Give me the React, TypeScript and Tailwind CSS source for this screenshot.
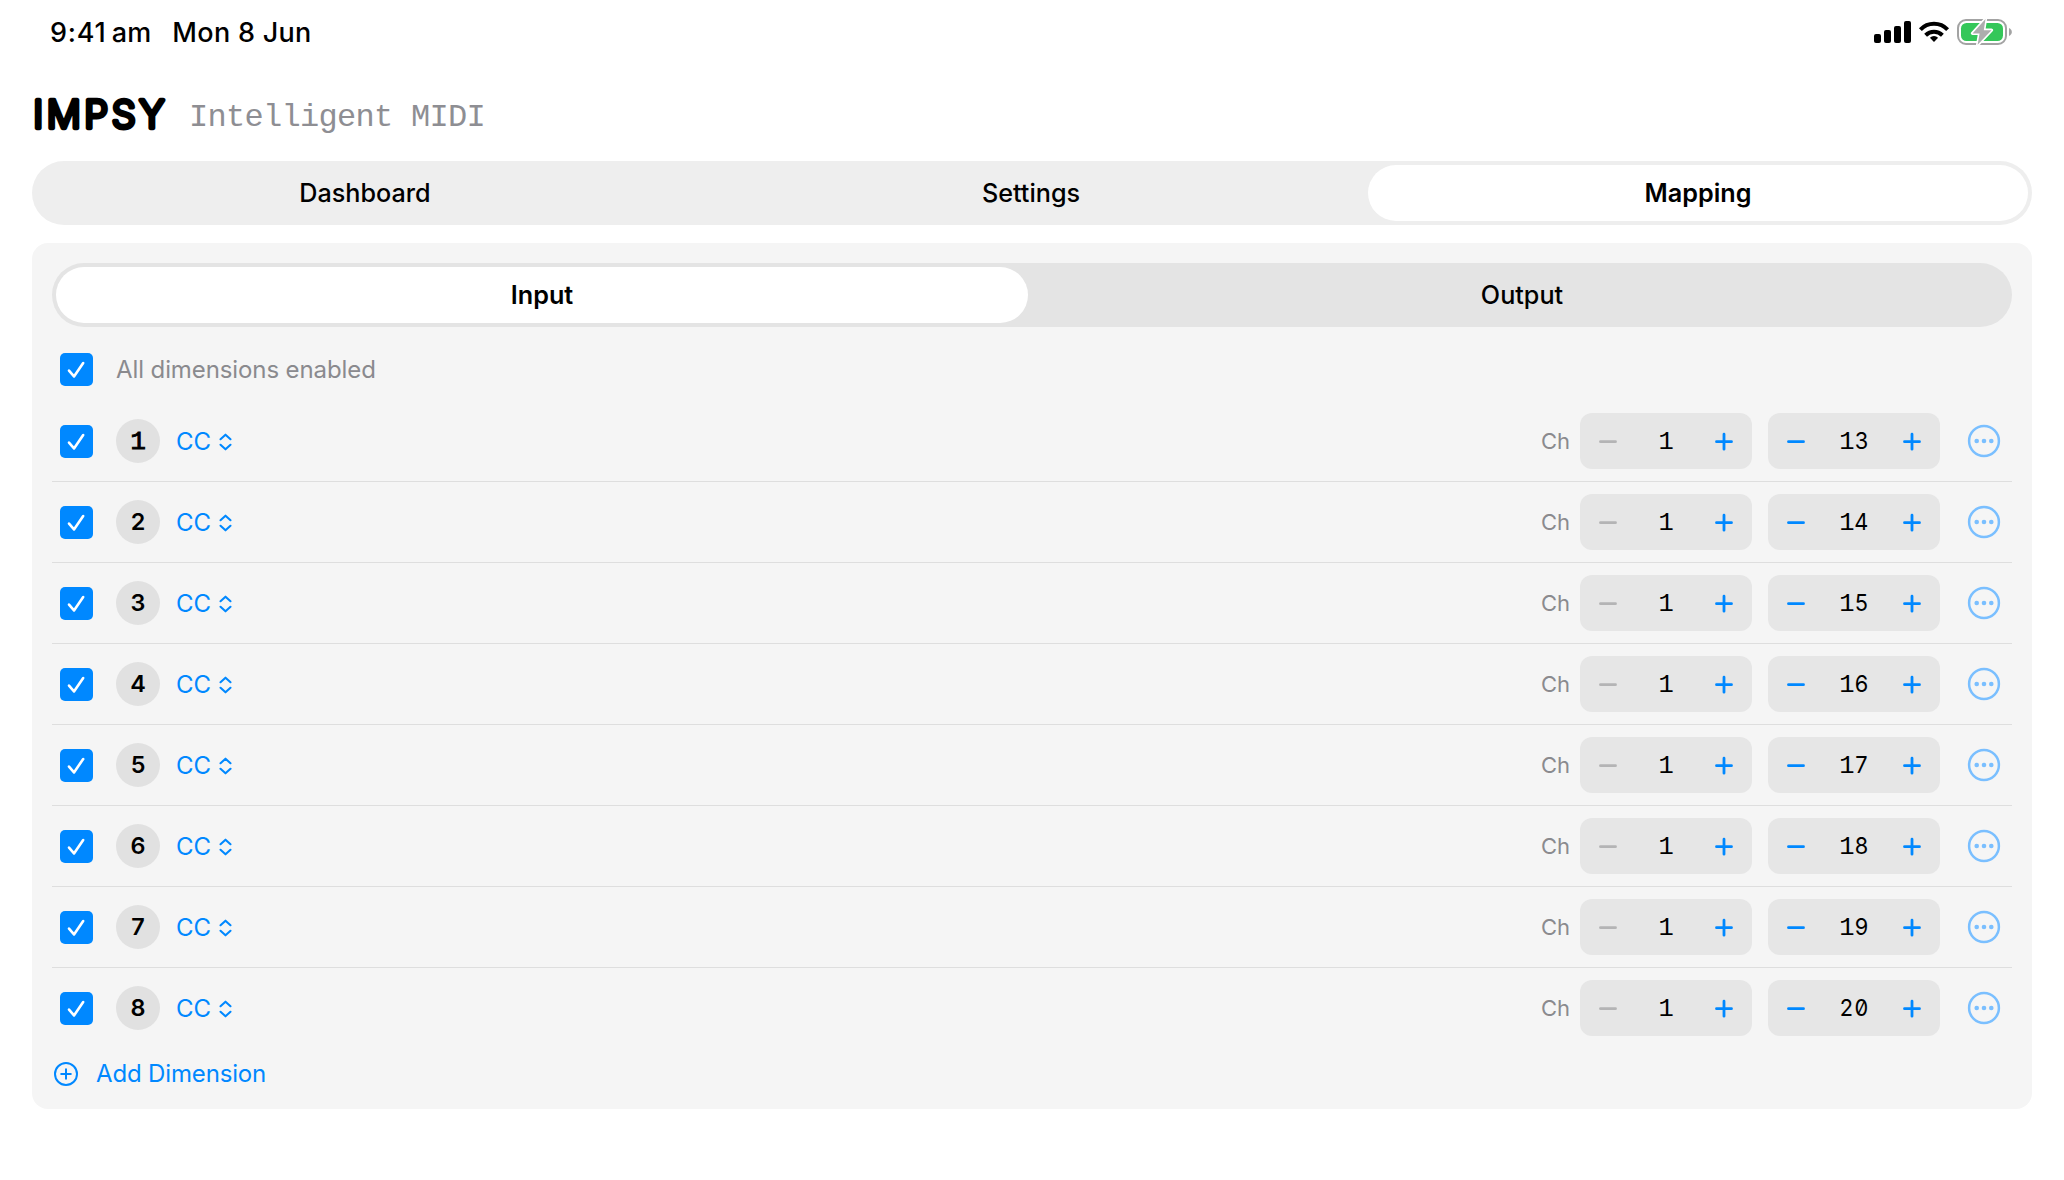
const INTER = "font-['Inter','Liberation_Sans',sans-serif]";

function Digits({ value, weight }: { value: number; weight: "medium" | "bold" }) {
  return (
    <span className="flex text-[23.4px] leading-none text-black">
      {String(value)
        .split("")
        .map((d, i) =>
          d === "1" ? (
            <span
              key={i}
              className={
                weight === "bold"
                  ? "w-[14.8px] translate-y-[2px] text-center font-['Liberation_Mono',monospace] text-[25.5px] leading-[24px] [-webkit-text-stroke:1px_currentColor]"
                  : "w-[14.8px] translate-y-[2px] text-center font-['Liberation_Mono',monospace] text-[25.5px] leading-[24px]"
              }
            >
              1
            </span>
          ) : (
            <span
              key={i}
              className={
                weight === "bold"
                  ? "flex w-[14.8px] justify-center leading-[24px] font-semibold"
                  : "flex w-[14.8px] scale-x-[0.93] justify-center leading-[24px] [font-feature-settings:'zero']"
              }
            >
              {d}
            </span>
          ),
        )}
    </span>
  );
}

function Checkbox() {
  return (
    <span className="flex h-[33px] w-[33px] shrink-0 items-center justify-center rounded-[5px] bg-[#0088ff]">
      <svg width="33" height="33" viewBox="0 0 33 33" fill="none">
        <path d="M9 17.6 L14 23.4 L23.2 10" stroke="#fff" strokeWidth="2.6" strokeLinecap="round" strokeLinejoin="round" />
      </svg>
    </span>
  );
}

function Stepper({ value, atMin }: { value: number; atMin?: boolean }) {
  return (
    <div className="flex h-14 w-[172px] items-center justify-between rounded-xl bg-[#e6e6e6] px-[18px]">
      <svg width="20" height="20" viewBox="0 0 20 20">
        <path d="M2.5 10.7H17.5" stroke={atMin ? "#b4b4b5" : "#0088ff"} strokeWidth="2.8" strokeLinecap="round" />
      </svg>
      <Digits value={value} weight="medium" />
      <svg width="20" height="20" viewBox="0 0 20 20">
        <path d="M2.5 10.7H17.5M10 3.2V18.2" stroke="#0088ff" strokeWidth="2.8" strokeLinecap="round" />
      </svg>
    </div>
  );
}

function DimensionRow({ index, last }: { index: number; last: boolean }) {
  return (
    <div className={last ? "flex h-20 items-center" : "flex h-[81px] items-center border-b border-[#dedede]"}>
      <div className="flex w-16 pt-px pl-2">
        <Checkbox />
      </div>
      <div className="flex h-11 w-11 items-center justify-center rounded-full bg-[#e1e1e1]">
        <Digits value={index} weight="bold" />
      </div>
      <div className="ml-4 flex items-center gap-2 pt-px text-[#0088ff]">
        <span className="text-[24px] leading-none">CC</span>
        <svg width="13" height="18" viewBox="0 0 13 18" fill="none">
          <path d="M1.5 6.2 L6.5 1.7 L11.5 6.2 M1.5 11.8 L6.5 16.3 L11.5 11.8" stroke="#0088ff" strokeWidth="2.1" strokeLinecap="round" strokeLinejoin="round" />
        </svg>
      </div>
      <div className="ml-auto flex items-center">
        <span className="mr-[10px] text-[22px] leading-none text-[#8a8a8e]">Ch</span>
        <Stepper value={1} atMin />
        <div className="w-4" />
        <Stepper value={12 + index} />
        <svg className="mr-[11px] ml-[27px]" width="34" height="34" viewBox="0 0 34 34">
          <circle cx="17" cy="17" r="14.9" fill="none" stroke="#7abfff" strokeWidth="2.5" />
          <g fill="#7abfff">
            <circle cx="9.7" cy="17" r="2.3" />
            <circle cx="17" cy="17" r="2.3" />
            <circle cx="24.3" cy="17" r="2.3" />
          </g>
        </svg>
      </div>
    </div>
  );
}

function StatusIcons() {
  return (
    <svg className="mr-5" width="140" height="28" viewBox="0 0 140 28">
      <rect x="2" y="16" width="7" height="9" rx="2" />
      <rect x="12" y="12" width="7" height="13" rx="2" />
      <rect x="22" y="8" width="7" height="17" rx="2" />
      <rect x="32" y="3" width="7" height="22" rx="2" />
      <g fill="none" stroke="#000" strokeWidth="4">
        <path d="M48.4 11.6 A18.8 18.8 0 0 1 75.6 11.6" />
        <path d="M53.6 17.2 A12 12 0 0 1 70.4 17.2" />
      </g>
      <path d="M62 24 L57.9 19.7 A6 6 0 0 1 66.1 19.7 Z" />
      <rect x="86" y="2" width="48" height="24" rx="8" fill="none" stroke="#a3a3a3" strokeWidth="2" />
      <rect x="89" y="5" width="42" height="18" rx="5.5" fill="#34c759" />
      <path d="M137 10 C140.8 11.5 140.8 16.5 137 18 Z" fill="#a3a3a3" />
      <path d="M113.5 1 L100.5 15.4 H107.6 L105.6 26.8 L119.5 12.2 H111.8 Z" fill="#adadad" stroke="#fff" strokeWidth="3.2" strokeLinejoin="round" paintOrder="stroke" />
    </svg>
  );
}

export default function App() {
  return (
    <div className={`flex h-[1180px] w-[2064px] flex-col overflow-hidden bg-white px-8 text-black ${INTER}`}>
      <header className="flex h-[64px] shrink-0 justify-between pt-[18px]">
        <div className="flex h-7 items-center pl-[18px] text-[27px] leading-none font-medium">
          <span className="tracking-[0.8px]">9:41<span className="ml-[5px] tracking-[0.2px]">am</span></span>
          <span className="ml-[21px] tracking-[0.3px]">Mon 8 Jun</span>
        </div>
        <StatusIcons />
      </header>

      <div className="flex h-[97px] shrink-0 items-center pb-px">
        <svg className="overflow-visible" width="150" height="60" viewBox="0 0 150 60">
          <text x="1.2" y="46" fontFamily="Inter" fontSize="37.8" fontWeight="300" stroke="#000" strokeWidth="4.3" strokeLinejoin="round" letterSpacing="3.6">
            IMPSY
          </text>
        </svg>
        <span className="ml-[7px] pt-[11px] font-['Liberation_Mono',monospace] text-[32px] leading-none tracking-[-0.7px] text-[#8e8e93]">Intelligent MIDI</span>
      </div>

      <nav className="grid h-16 shrink-0 grid-cols-3 gap-1.5 rounded-full bg-[#eeeeee] p-1 text-[25.2px] font-medium">
        <div className="flex items-center justify-center pt-px pr-0.5">Dashboard</div>
        <div className="flex items-center justify-center pt-px pr-0.5">Settings</div>
        <div className="flex items-center justify-center rounded-full bg-white pt-px font-semibold">Mapping</div>
      </nav>

      <main className="mt-[18px] h-[866px] shrink-0 rounded-2xl bg-[#f5f5f5] px-5 pt-5">
        <div className="grid h-16 grid-cols-2 gap-2 rounded-full bg-[#e4e4e4] p-1 text-[25.2px] font-medium">
          <div className="flex items-center justify-center rounded-full bg-white pt-px font-semibold">Input</div>
          <div className="flex items-center justify-center pt-px">Output</div>
        </div>
        <div className="flex h-[74px] items-center pt-[11px] pl-2">
          <Checkbox />
          <span className="ml-[23px] text-[24px] leading-none tracking-[-0.1px] text-[#8a8a8e]">All dimensions enabled</span>
        </div>
        {[1, 2, 3, 4, 5, 6, 7, 8].map((n) => (
          <DimensionRow key={n} index={n} last={n === 8} />
        ))}
        <div className="flex h-[52px] items-center text-[#0088ff]">
          <svg width="28" height="28" viewBox="0 0 28 28" fill="none" stroke="#0088ff" strokeWidth="2" strokeLinecap="round">
            <circle cx="14" cy="14" r="11" />
            <path d="M9.2 14H18.8M14 9.2V18.8" />
          </svg>
          <span className="ml-4 text-[24px] leading-none tracking-[-0.15px]">Add Dimension</span>
        </div>
      </main>
    </div>
  );
}
